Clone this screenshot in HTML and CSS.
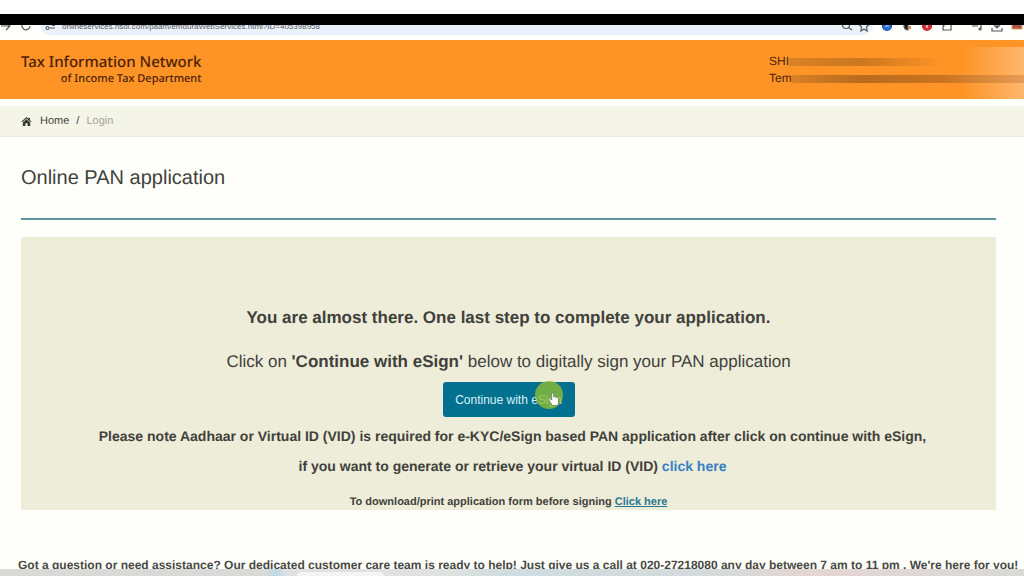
FILE: index.html
```html
<!DOCTYPE html>
<html lang="en">
<head>
<meta charset="utf-8">
<meta name="viewport" content="width=device-width, initial-scale=1">
<title>Online PAN application</title>
<link rel="stylesheet" href="styles.css">
</head>
<body>
<div class="screen">
  <div class="bezel"></div>
  <div class="browser">
    <div class="browser-row">
      <button class="tool" aria-label="Forward"><svg viewBox="0 0 12 12"><path d="M1 6h9M6 2l4 4-4 4"/></svg></button>
      <button class="tool" aria-label="Reload"><svg viewBox="0 0 12 12"><path d="M10 6a4 4 0 1 1-1.200-3M10 1v3H7"/></svg></button>
      <div class="omnibox">
        <svg class="tune" viewBox="0 0 12 12"><path d="M1 4h5M10 8H5"/><circle cx="8.500" cy="4" r="1.500"/><circle cx="2.500" cy="8" r="1.500"/></svg>
        <input class="url" aria-label="Address" value="onlineservices.nsdl.com/paam/emduraWebServices.html?ID=405398958">
        <button class="tool" aria-label="Zoom"><svg viewBox="0 0 12 12"><circle cx="5" cy="5" r="3.500"/><path d="M7.500 7.500L11 10"/></svg></button>
        <button class="tool" aria-label="Bookmark"><svg viewBox="0 0 12 12"><path d="M6 1l1.500 3 3.500.5-2.500 2.500.6 4L6 9l-3.100 2 .6-4L1 4.500 4.500 4z"/></svg></button>
      </div>
      <div class="extensions">
        <button class="tool" aria-label="Blue extension"><svg viewBox="0 0 12 12"><circle cx="6" cy="6" r="4.500" fill="#2d6fd0" stroke="#1c56b4"/><path d="M4 6h4" stroke="#a9cbff"/></svg></button>
        <button class="tool" aria-label="Dark extension"><svg viewBox="0 0 12 12"><path d="M7 2a4 4 0 1 0 0 8z" fill="#222"/><path d="M8 6h2v3H8z" fill="#f08a32" stroke="none"/></svg></button>
        <button class="tool" aria-label="Red extension"><svg viewBox="0 0 12 12"><circle cx="6" cy="6" r="4.500" fill="#d5303b" stroke="#c32b36"/><path d="M6 4v4" stroke="#fff"/></svg></button>
        <button class="tool" aria-label="Extensions"><svg viewBox="0 0 12 12"><path d="M2 10V7l1-1-1-1V3h3c0-2 3-2 3 0h2v7z"/></svg></button>
        <button class="tool media" aria-label="Media controls"><svg viewBox="0 0 12 12"><path d="M1 3h7M1 6h6M10 9V2"/><circle cx="9" cy="9" r="1"/></svg></button>
        <button class="tool" aria-label="Downloads"><svg viewBox="0 0 12 12"><path d="M6 1v6M3 5l3 3 3-3M1 8v3h10V8"/></svg></button>
        <button class="tool" aria-label="Profile"><svg viewBox="0 0 12 12"><path d="M1 9V3h10v6z" fill="#a5563a" stroke="#e0a070"/></svg></button>
      </div>
    </div>
  </div>

  <header class="masthead">
    <div class="brand"><span class="brand-name">Tax Information Network</span><span class="brand-sub">of Income Tax Department</span></div>
    <div class="account">
      <div class="account-row">SHI<span class="smear smear-short"></span></div>
      <div class="account-row">Tem<span class="smear"></span></div>
    </div>
  </header>

  <nav class="crumbs" aria-label="Breadcrumb">
    <svg class="home-icon" viewBox="0 0 12 12"><path d="M6 1L0.500 6l.8.9L6 2.700l4.700 4.200.8-.9-1.700-1.500V2H8.300v1.100z"/><path d="M2 7l4-3.500L10 7v4H7.200V8H4.800v3H2z"/></svg>
    <a class="crumb" href="#">Home</a><span class="slash">/</span><span class="current">Login</span>
  </nav>

  <main class="content">
    <h1 class="title">Online PAN application</h1>
    <section class="panel">
      <h2 class="lead">You are almost there. One last step to complete your application.</h2>
      <p class="instruction">Click on <b>'Continue with eSign'</b> below to digitally sign your PAN application</p>
      <div class="action">
        <button class="esign">Continue with eSign</button>
        <svg class="pointer" viewBox="0 0 28 28"><circle cx="14" cy="14" r="14" fill="#8dbd35" fill-opacity=".8"/><path d="M17 24l-3-5c-.7-1.200.8-2 1.700-.8l1 1V13c0-1.400 2-1.400 2 0v3c.5-.7 1.500-.5 1.700.2.600-.5 1.500-.2 1.600.6.800-.3 1.500.2 1.500 1v3.500c0 1.500-.8 2-.8 3.200h-5z" fill="#fff" stroke="#64705c" stroke-width=".7"/></svg>
      </div>
      <p class="note">Please note Aadhaar or Virtual ID (VID) is required for e-KYC/eSign based PAN application after click on continue with eSign,<br>if you want to generate or retrieve your virtual ID (VID) <a class="vid-link" href="#">click here</a></p>
      <p class="download">To download/print application form before signing <a class="print-link" href="#">Click here</a></p>
    </section>
  </main>

  <footer class="help">Got a question or need assistance? Our dedicated customer care team is ready to help! Just give us a call at 020-27218080 any day between 7 am to 11 pm . We're here for you!</footer>
  <div class="taskbar"><span class="task-search"></span></div>
</div>
</body>
</html>
```
FILE: styles.css
```css
* { box-sizing: border-box; }
body { margin: 0; background: #fff; color: #41413b; font-family: "Liberation Sans", Arial, sans-serif; text-rendering: geometricPrecision; }
button, input { font: inherit; border: 0; padding: 0; margin: 0; background: none; }
h1, h2, p { margin: 0; }
.screen { height: 100vh; padding-top: 14px; display: flex; flex-direction: column; overflow: hidden; background: #fefffb; }
.bezel { flex: none; height: 11px; background: #000; box-shadow: 0 -14px 0 #fff; }

.browser { flex: none; height: 15px; overflow: hidden; display: flex; align-items: flex-end; padding-bottom: 5px; background: #fffffb; }
.browser-row { flex: 1; height: 20px; display: flex; align-items: flex-end; gap: 8px; }
.tool { flex: none; width: 12px; height: 12px; margin-bottom: 3px; display: block; }
.tool svg, .tune { display: block; width: 12px; height: 12px; fill: none; stroke: #55585c; stroke-width: 1.2; }
.omnibox { flex: 1; height: 20px; padding: 0 3px 0 5px; display: flex; align-items: flex-end; gap: 5px; background: #eaf1fb; border-radius: 10px; }
.tune { flex: none; margin-bottom: 3px; }
.url { flex: 1; min-width: 0; height: 14px; margin-bottom: 2px; font-size: 8px; color: #55585c; }
.extensions { display: flex; gap: 8px; padding-right: 1px; }
.media { margin-left: 10px; }

.masthead { flex: none; height: 59px; padding: 12px 0 0 21px; display: flex; justify-content: space-between; color: #4b1f0b; background: linear-gradient(90deg, transparent 94%, #ffb76e 100%) 0 7px no-repeat, #fe9425; }
.brand { display: flex; flex-direction: column; align-items: flex-end; font-family: "Noto Sans", sans-serif; font-weight: 500; }
.brand-name { font-size: 15px; line-height: 20px; }
.brand-sub { font-size: 11px; line-height: 13px; }
.account { width: 255px; padding-top: 1px; font-size: 12px; line-height: 17px; }
.account-row { display: flex; align-items: center; }
.smear { flex: 1; height: 8px; background: linear-gradient(90deg, #d88025, #b96b1c 30%, #ca741f 65%, #e89c55); }
.smear-short { background: linear-gradient(90deg, #d98125, #cc771f 30%, #fe942500 66%); }

.crumbs { flex: none; height: 31px; margin-top: 7px; padding-left: 21px; display: flex; align-items: center; font-size: 11px; background: #f4f4e9; border-bottom: 1px solid #e9e9e2; }
.home-icon { width: 11px; height: 11px; margin-right: 8px; fill: #373832; }
.crumb { color: #45463e; text-decoration: none; }
.slash { margin: 0 7px; }
.current { color: #a3a39d; }

.content { flex: none; padding: 0 28px 0 21px; }
.title { height: 83px; padding-top: 29px; font-size: 20px; line-height: 24px; font-weight: 400; border-bottom: 2px solid #5e93a0; }
.panel { margin-top: 17px; padding-top: 70px; background: #eeedda; text-align: center; }
.lead { font-size: 17px; line-height: 22px; }
.instruction { margin-top: 22px; font-size: 17px; line-height: 22px; }
.action { position: relative; width: 132px; margin: 9px auto 0; }
.esign { width: 100%; height: 35px; display: block; font-size: 12px; color: #d7f0f4; background: #03708f; border-radius: 3px; cursor: pointer; }
.pointer { position: absolute; top: -1px; right: 12px; width: 28px; height: 28px; pointer-events: none; }
.note { margin-top: 4px; padding-left: 8px; font-size: 14px; line-height: 30px; font-weight: 700; }
.vid-link { color: #3780c4; text-decoration: none; }
.download { margin-top: 13px; font-size: 11px; line-height: 16px; font-weight: 700; }
.print-link { color: #287893; }

.help { flex: 1; min-height: 0; overflow: hidden; padding: 47px 0 0 18px; font-size: 12px; line-height: 16px; font-weight: 700; white-space: nowrap; color: #484943; }
.taskbar { flex: none; height: 7px; padding-left: 29%; display: flex; align-items: flex-end; background: linear-gradient(90deg, #d9dad8 0 26%, #b9dae6 27%, #dfe2e0 28% 43%, #cfdce0 50%, #d5dadb 70%, #e4d5d2 78%, #d9d9d8); }
.task-search { width: 12%; height: 4px; background: #f3f4f3; border-radius: 4px 4px 0 0; }
```
